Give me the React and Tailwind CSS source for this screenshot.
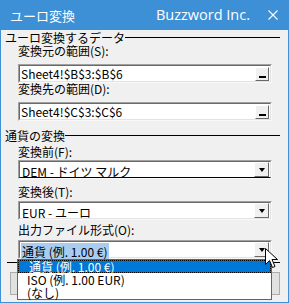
import React from "react";

const Field = ({ value }) => (
  <div className="ml-[17px] w-[254px] h-[19px] border border-t-[#a0a0a0] border-l-[#a0a0a0] border-b-[#f8f8f8] border-r-[#f8f8f8]">
    <div className="h-full flex items-center bg-white border border-t-[#696969] border-l-[#696969] border-b-[#e3e3e3] border-r-[#e3e3e3] pl-[1px] pr-[1px]">
      <span className="flex-1 text-[12px] leading-none text-black">{value}</span>
      <div className="w-[14px] h-[14px] bg-[#f0f0f0] border border-t-white border-l-white border-b-[#696969] border-r-[#696969] flex items-end justify-center pb-[2px]">
        <div className="w-[7px] h-[2px] bg-black" />
      </div>
    </div>
  </div>
);

const Combo = ({ value, selected, dark }) => (
  <div className="ml-[17px] w-[254px] h-[19px] border border-t-[#a0a0a0] border-l-[#a0a0a0] border-b-[#f8f8f8] border-r-[#f8f8f8]">
    <div
      className={`h-full flex items-center bg-white border border-t-[#696969] border-l-[#696969] border-r-[#e3e3e3] ${
        dark ? "border-b-black" : "border-b-[#e3e3e3]"
      }`}
    >
      <div className="flex-1 pl-[1px]">
        <span
          className={`text-[12px] leading-[14px] text-black px-[1px] ${
            selected ? "bg-[#a8cdf0]" : ""
          }`}
        >
          {value}
        </span>
      </div>
      <div className="w-[15px] h-[15px] mr-[1px] bg-[#f0f0f0] border border-t-white border-l-white border-b-[#696969] border-r-[#696969] flex items-center justify-center">
        <div className="w-0 h-0 border-l-[3px] border-r-[3px] border-t-[4px] border-l-transparent border-r-transparent border-t-black" />
      </div>
    </div>
  </div>
);

const Heading = ({ text }) => (
  <div className="flex items-center pl-[4px] pr-[8px] h-[15px]">
    <span className="text-[12px] leading-none text-black">{text}</span>
    <div className="flex-1 h-[1px] bg-black" />
  </div>
);

const Label = ({ text }) => (
  <div className="pl-[17px] h-[12px] flex items-center text-[12px] leading-none text-black">
    {text}
  </div>
);

export default function App() {
  return (
    <div className="relative w-[289px] h-[303px] overflow-hidden bg-[#3d8fd6] font-['Noto_Sans_CJK_JP',sans-serif]">
      {/* title bar */}
      <div className="h-[30px] flex items-center text-white">
        <span className="pl-[10px] text-[13px] leading-none">ユーロ変換</span>
        <span className="ml-auto mr-[7px] text-[14.5px] leading-none font-['Open_Sans',sans-serif]">
          Buzzword Inc.
        </span>
        <div className="w-[32px] flex justify-center">
          <svg width="10" height="10" viewBox="0 0 10 10">
            <path d="M0.5 0.5 L9.5 9.5 M9.5 0.5 L0.5 9.5" stroke="white" strokeWidth="1.1" />
          </svg>
        </div>
      </div>

      {/* body */}
      <div className="mx-[1px] h-[272px] bg-[#f0f0f0] flex flex-col">
        <Heading text="ユーロ変換するデータ" />
        <Label text="変換元の範囲(S):" />
        <div className="mt-[7px]">
          <Field value="Sheet4!$B$3:$B$6" />
        </div>
        <Label text="変換先の範囲(D):" />
        <div className="mt-[7px]">
          <Field value="Sheet4!$C$3:$C$6" />
        </div>
        <div className="mt-[7px]">
          <Heading text="通貨の変換" />
        </div>
        <div className="mt-[3px]">
          <Label text="変換前(F):" />
        </div>
        <div className="mt-[2px]">
          <Combo value="DEM - ドイツ マルク" dark />
        </div>
        <div className="mt-[7px]">
          <Label text="変換後(T):" />
        </div>
        <div className="mt-[3px]">
          <Combo value="EUR - ユーロ" />
        </div>
        <div className="mt-[4px]">
          <Label text="出力ファイル形式(O):" />
        </div>
        <div className="mt-[4px]">
          <Combo value="通貨 (例. 1.00 €)" selected />
        </div>
        <div className="mt-[3px] pl-[6px] pr-[8px]">
          <div className="h-[1px] bg-black" />
        </div>
        <div className="mt-[9px] flex justify-between pl-[9px] pr-[8px]">
          <div className="w-[120px] h-[23px] border border-[#adadad] bg-[#e1e1e1]" />
          <div className="w-[120px] h-[23px] border border-[#adadad] bg-[#e1e1e1]" />
        </div>
      </div>

      {/* open dropdown list */}
      <div className="absolute left-[17px] top-[259px] w-[255px] h-[41px] bg-white border border-[#646464] text-[12px] leading-none text-black">
        <div className="h-[13px] bg-[#0078d7] text-white flex items-center pl-[10px] border border-dotted border-black">
          通貨 (例. 1.00 €)
        </div>
        <div className="h-[13px] flex items-center pl-[9px]">ISO (例. 1.00 EUR)</div>
        <div className="h-[13px] flex items-center pl-[9px]">(なし)</div>
      </div>

      {/* mouse cursor */}
      <svg
        className="absolute left-[265px] top-[248px]"
        width="13"
        height="21"
        viewBox="0 0 13 21"
      >
        <path
          d="M0.5 0.5 L0.5 16.5 L4.5 12.5 L7.5 19.5 L10 18.5 L7 11.5 L12.5 11.5 Z"
          fill="white"
          stroke="black"
          strokeWidth="1"
        />
      </svg>
    </div>
  );
}
